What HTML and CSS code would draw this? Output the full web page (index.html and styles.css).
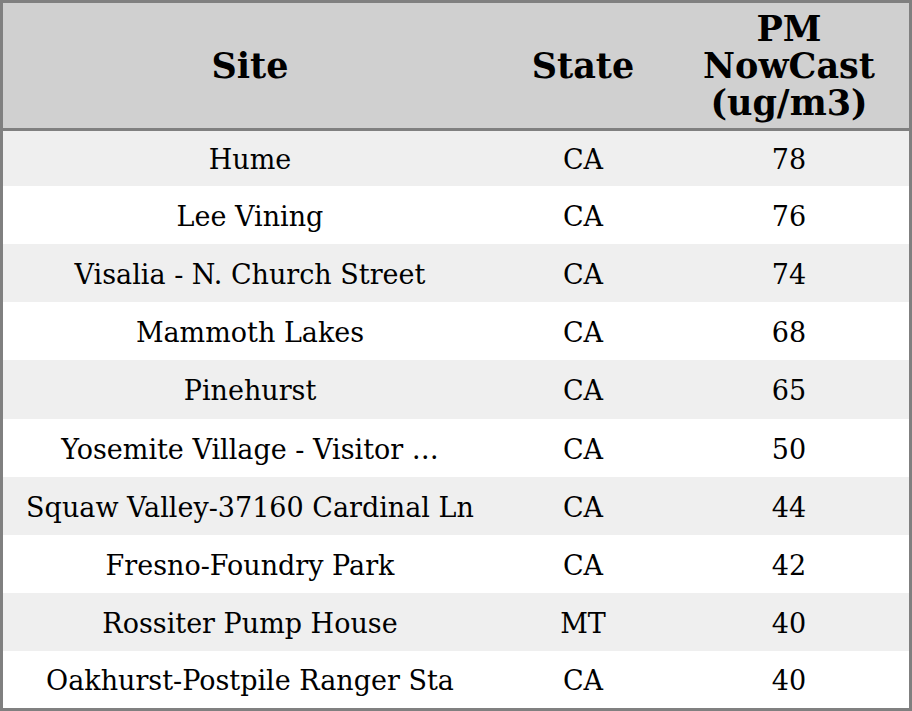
FILE: index.html
```html
<!DOCTYPE html>
<html>
<head>
<meta charset="utf-8">
<link rel="stylesheet" href="styles.css">
</head>
<body>
<table class="grid">
  <colgroup><col class="c-site"><col class="c-state"><col class="c-pm"></colgroup>
  <thead>
    <tr><th>Site</th><th>State</th><th>PM<br>NowCast<br>(ug/m3)</th></tr>
  </thead>
  <tbody>
    <tr><td>Hume</td><td>CA</td><td>78</td></tr>
    <tr><td>Lee Vining</td><td>CA</td><td>76</td></tr>
    <tr><td>Visalia - N. Church Street</td><td>CA</td><td>74</td></tr>
    <tr><td>Mammoth Lakes</td><td>CA</td><td>68</td></tr>
    <tr><td>Pinehurst</td><td>CA</td><td>65</td></tr>
    <tr><td>Yosemite Village - Visitor …</td><td>CA</td><td>50</td></tr>
    <tr><td>Squaw Valley-37160 Cardinal Ln</td><td>CA</td><td>44</td></tr>
    <tr><td>Fresno-Foundry Park</td><td>CA</td><td>42</td></tr>
    <tr><td>Rossiter Pump House</td><td>MT</td><td>40</td></tr>
    <tr><td>Oakhurst-Postpile Ranger Sta</td><td>CA</td><td>40</td></tr>
  </tbody>
</table>
</body>
</html>
```
FILE: styles.css
```css
html, body { margin: 0; padding: 0; background: #ffffff; }
.grid {
  width: 912px;
  height: 711px;
  border-collapse: separate;
  border-spacing: 0;
  border: 3px solid #808080;
  box-sizing: border-box;
  table-layout: fixed;
  font-family: "DejaVu Serif", serif;
  color: #000;
}
.c-site { width: 494px; }
.c-state { width: 172px; }
.c-pm { width: 240px; }
.grid th {
  background: #d0d0d0;
  font-size: 35px;
  font-weight: bold;
  line-height: 37px;
  height: 125px;
  padding: 0;
  border-bottom: 3px solid #808080;
  text-align: center;
  vertical-align: middle;
}
.grid td {
  font-size: 27px;
  line-height: 32px;
  text-align: center;
  vertical-align: middle;
  padding: 4px 0 0;
  box-sizing: border-box;
  height: 58.125px;
  white-space: nowrap;
}
.grid tbody tr:first-child td { height: 55px; padding-top: 2px; }
.grid tbody tr:last-child td { height: 57px; padding-top: 2px; }
.grid tbody tr:nth-child(odd) td { background: #efefef; }
.grid tbody tr:nth-child(even) td { background: #ffffff; }
```
